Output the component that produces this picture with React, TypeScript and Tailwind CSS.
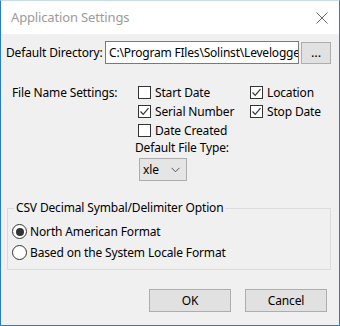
import React from "react";

const font = { fontFamily: '"Noto Sans", "Liberation Sans", sans-serif' };

const CheckBox = ({ label, checked }: { label: string; checked?: boolean }) => (
  <div className="flex items-center h-[19px]">
    <span className="w-[13px] h-[13px] border border-[#333333] bg-white flex items-center justify-center">
      {checked && (
        <svg width="11" height="11" viewBox="0 0 11 11">
          <path d="M1.5 5.5 L4.2 8.3 L9.5 2.2" fill="none" stroke="#333" strokeWidth="1.2" />
        </svg>
      )}
    </span>
    <span className="ml-[4px] text-[12px] leading-[15px] text-black">{label}</span>
  </div>
);

const Radio = ({ label, checked }: { label: string; checked?: boolean }) => (
  <div className="flex items-center h-[21px]">
    <span className="w-[15px] h-[15px] rounded-full border border-[#333333] bg-white flex items-center justify-center">
      {checked && <span className="w-[8px] h-[8px] rounded-full bg-[#333333]" />}
    </span>
    <span className="ml-[3px] text-[12px] leading-[15px] text-black">{label}</span>
  </div>
);

const App = () => {
  return (
    <div
      className="w-[340px] h-[326px] border border-[#2b7cc0] border-t-[#c9dcec] bg-[#f0f0f0] flex flex-col overflow-hidden tracking-[-0.15px]"
      style={font}
    >
      {/* title bar */}
      <div className="h-[33px] bg-white flex items-center justify-between pl-[10px] pr-[11px]">
        <span className="text-[13px] text-[#9b9b9b]">Application Settings</span>
        <svg width="12" height="12" viewBox="0 0 12 12">
          <path d="M0.5 0.5 L11.5 11.5 M11.5 0.5 L0.5 11.5" stroke="#666" strokeWidth="1" />
        </svg>
      </div>

      {/* directory */}
      <div className="mt-[7px] flex items-center pl-[5px]">
        <span className="w-[99px] text-[12px] text-black whitespace-nowrap">Default Directory:</span>
        <div className="w-[194px] h-[23px] border border-[#7a7a7a] bg-white flex items-center pl-[3px] overflow-hidden">
          <span className="text-[12px] tracking-[-0.2px] text-black whitespace-nowrap">C:\Program FIles\Solinst\Levelogge</span>
        </div>
        <button className="ml-[2px] w-[30px] h-[22px] border border-[#adadad] bg-[#e1e1e1] text-[13px] leading-none text-black">
          ...
        </button>
      </div>

      {/* file name settings */}
      <div className="mt-[19px] flex pl-[11px]">
        <div className="w-[126px] h-[19px] flex items-center text-[12px] text-black">File Name Settings:</div>
        <div className="w-[112px] flex flex-col">
          <CheckBox label="Start Date" />
          <CheckBox label="Serial Number" checked />
          <CheckBox label="Date Created" />
          <div className="ml-[-3px] h-[15px] text-[12px] leading-[15px] text-black whitespace-nowrap">Default File Type:</div>
          <div className="mt-[3px] ml-[1px] w-[48px] h-[23px] border border-[#adadad] bg-[#e5e5e5] flex items-center justify-between pl-[3px] pr-[6px]">
            <span className="text-[12px] text-black">xle</span>
            <svg width="9" height="6" viewBox="0 0 9 6">
              <path d="M0.5 0.8 L4.5 4.8 L8.5 0.8" fill="none" stroke="#555" strokeWidth="1" />
            </svg>
          </div>
        </div>
        <div className="flex flex-col">
          <CheckBox label="Location" checked />
          <CheckBox label="Stop Date" checked />
        </div>
      </div>

      {/* CSV group */}
      <fieldset className="mt-[19px] ml-[6px] w-[324px] border border-[#dcdcdc] pl-[4px] pb-[6px]">
        <legend className="ml-[2px] px-[2px] text-[12px] leading-[16px] text-black">
          CSV Decimal Symbal/Delimiter Option
        </legend>
        <div className="pt-[5px] flex flex-col">
          <Radio label="North American Format" checked />
          <Radio label="Based on the System Locale Format" />
        </div>
      </fieldset>

      {/* buttons */}
      <div className="mt-[19px] flex justify-end gap-[14px] pr-[12px]">
        <button className="w-[82px] h-[23px] border border-[#adadad] bg-[#e1e1e1] text-[12px] text-black">OK</button>
        <button className="w-[82px] h-[23px] border border-[#adadad] bg-[#e1e1e1] text-[12px] text-black">Cancel</button>
      </div>
    </div>
  );
};

export default App;
